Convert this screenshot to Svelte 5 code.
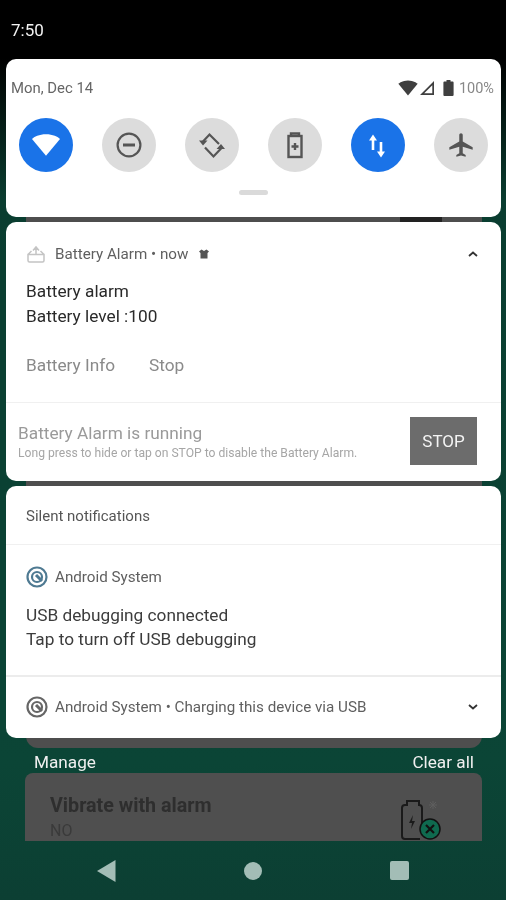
<script>
	let tiles = [
		{ id: 'wifi', on: true },
		{ id: 'dnd', on: false },
		{ id: 'rotate', on: false },
		{ id: 'saver', on: false },
		{ id: 'data', on: true },
		{ id: 'plane', on: false }
	];
</script>

<div class="screen">
	<div class="under"><div class="clipped"></div></div>

	<div class="status">7:50</div>

	<section class="card qs">
		<div class="qs-top">
			<span class="date">Mon, Dec 14</span>
			<div class="sys">
				<svg width="20" height="20" viewBox="0 0 24 24"><path d="M12 21 23.600 7C23 6.500 18.700 3 12 3S1 6.500.4 7z" fill="#3f3f3f" /></svg>
				<svg class="sig" width="16" height="16" viewBox="0 0 16 16"><path d="M15 1v14H1zM13.300 5.200 5.200 13.300h8.100z" fill="#3f3f3f" fill-rule="evenodd" /></svg>
				<svg class="bat" width="11" height="16" viewBox="0 0 11 16"><path d="M3.500 0h4v1.600h2.200c.5 0 .9.4.9.9v12.600c0 .5-.4.9-.9.9H1.300c-.5 0-.9-.4-.9-.9V2.500c0-.5.4-.9.9-.9h2.200z" fill="#3f3f3f" /></svg>
				<span class="pct">100%</span>
			</div>
		</div>
		<div class="tiles">
			{#each tiles as t}
				<div class="tile" class:on={t.on}>
					{#if t.id === 'wifi'}
						<svg width="32" height="32" viewBox="0 0 24 24"><path d="M12 20 22.500 7.500C21 6 17 4 12 4S3 6 1.500 7.500z" fill="#fff" /></svg>
					{:else if t.id === 'dnd'}
						<svg width="28" height="28" viewBox="0 0 28 28" fill="none" stroke="#555" stroke-width="2.200"><circle cx="14" cy="14" r="11.400" /><path d="M8 14h12" stroke-width="3" /></svg>
					{:else if t.id === 'rotate'}
						<svg width="28" height="28" viewBox="0 0 28 28" fill="none" stroke="#555" stroke-width="2.200">
							<path d="M5 10.500 11.500 3.500 21 13" />
							<path d="M7 16.500 15.500 25.500 23.500 17" />
							<path d="M1 9.500h8.500L5 14.500zM27 18h-8.500L23 13z" fill="#555" stroke="none" />
						</svg>
					{:else if t.id === 'saver'}
						<svg width="28" height="28" viewBox="0 0 28 28" fill="none" stroke="#555" stroke-width="2.400"><path d="M10 4.500V2.500h8v2" /><rect x="7.500" y="5" width="13" height="21" /><path d="M14 12v7M10.500 15.500h7" /></svg>
					{:else if t.id === 'data'}
						<svg width="28" height="28" viewBox="0 0 28 28" fill="#fff"><path d="M9 3.500 5 9.500h2.700V19h2.600V9.500H13z" /><path d="M17 26.500l4-6h-2.700V11h-2.600v9.500H13z" /></svg>
					{:else}
						<svg width="28" height="28" viewBox="0 0 24 24" fill="#555"><path d="M22 16v-2l-8.500-5V3.500c0-.8-.7-1.500-1.500-1.500s-1.500.7-1.500 1.500V9L2 14v2l8.500-2.500V19L8 20.500V22l4-1 4 1v-1.500L13.500 19v-5.500z" /></svg>
					{/if}
				</div>
			{/each}
		</div>
		<div class="grip"></div>
	</section>

	<section class="card alarm">
		<div class="app-row">
			<svg class="app-icon" width="22" height="20" viewBox="0 0 22 20" fill="none" stroke="#c4c4c4" stroke-width="1.500"><path d="M2 10.500h16v6c0 .8-.6 1.500-1.500 1.500h-13C2.600 18 2 17.300 2 16.500zM2 10.500 5.500 7M18 10.500 14.500 7M7 6.500 10 3l3 3.500M10 4v6" /></svg>
			<span class="app-name">Battery Alarm • now</span>
			<svg class="bell" width="12" height="12" viewBox="0 0 12 12" fill="#555"><path d="M3.500 1.500 6 3l2.500-1.500L11 3.500 9.500 5v5.500h-7V5L1 3.500z" /></svg>
			<svg class="chev" width="12" height="8" viewBox="0 0 12 8" fill="none" stroke="#333" stroke-width="1.800"><path d="M2 6 6 2.500 10 6" /></svg>
		</div>
		<div class="body-text">
			<p>Battery alarm</p>
			<p>Battery level :100</p>
		</div>
		<div class="actions">
			<span>Battery Info</span>
			<span>Stop</span>
		</div>
		<div class="running">
			<div class="running-text">
				<div class="run-title">Battery Alarm is running</div>
				<div class="run-sub">Long press to hide or tap on STOP to disable the Battery Alarm.</div>
			</div>
			<div class="stop-btn">STOP</div>
		</div>
	</section>

	<section class="card silent">
		<div class="silent-head">Silent notifications</div>
		<div class="usb">
			<div class="app-row">
				<svg class="app-icon" width="22" height="22" viewBox="0 0 22 22" fill="none" stroke="#4f7a92" stroke-width="2.200"><circle cx="11" cy="11" r="9.500" /><circle cx="11" cy="11" r="5" /><path d="M10 9l6 6" stroke-width="3" /></svg>
				<span class="app-name">Android System</span>
			</div>
			<div class="body-text usb-text">
				<p>USB debugging connected</p>
				<p>Tap to turn off USB debugging</p>
			</div>
		</div>
		<div class="charging">
			<svg class="app-icon" width="22" height="22" viewBox="0 0 22 22" fill="none" stroke="#666" stroke-width="2.200"><circle cx="11" cy="11" r="9.500" /><circle cx="11" cy="11" r="5" /><path d="M10 9l6 6" stroke-width="3" /></svg>
			<span class="app-name">Android System • Charging this device via USB</span>
			<svg class="chev" width="12" height="8" viewBox="0 0 12 8" fill="none" stroke="#333" stroke-width="1.800"><path d="M2 2 6 5.500 10 2" /></svg>
		</div>
	</section>

	<div class="shade-row">
		<span>Manage</span>
		<span>Clear all</span>
	</div>

	<div class="vibrate">
		<div>
			<div class="vib-title">Vibrate with alarm</div>
			<div class="vib-sub">NO</div>
		</div>
		<svg class="vib-icon" width="48" height="46" viewBox="0 0 48 46" fill="none">
			<path d="M25 28V12c0-2-1-3-3-3V5H10v4H8c-2 0-3 1-3 3v28c0 2 1 3 3 3h15" stroke="#1a1a1a" stroke-width="2" />
			<path d="M16 19l-4 8h3l-1 6 4-8h-3z" fill="#1a1a1a" />
			<path d="M36 5v8M32 9h8M33 6l6 6M39 6l-6 6" stroke="#5e5e5e" stroke-width="1" />
			<circle cx="33" cy="33" r="10" fill="#0f6a4f" stroke="#111" stroke-width="1.500" />
			<path d="M29 29l8 8M37 29l-8 8" stroke="#111" stroke-width="2.200" />
		</svg>
	</div>

	<nav class="nav">
		<svg width="19" height="22" viewBox="0 0 19 22"><path d="M18.500 0v22L0 11z" fill="#a3bdb6" /></svg>
		<div class="home"></div>
		<div class="recent"></div>
	</nav>
</div>

<style>
	:global(body) {
		background: #0b4334;
	}

	.screen {
		position: relative;
		width: 506px;
		height: 900px;
		overflow: hidden;
		display: flex;
		flex-direction: column;
		font-family: Roboto, sans-serif;
		background: linear-gradient(180deg, #000 0, #000 58px, #0a3d30 200px, #0b4536 760px, #0c3f33 900px);
		filter: blur(0.7px);
	}

	.under {
		position: absolute;
		left: 26px;
		top: 205px;
		width: 456px;
		height: 543px;
		background: #4e4e4e;
		border-radius: 0 0 12px 12px;
	}

	.clipped {
		position: absolute;
		left: 374px;
		top: 12px;
		width: 42px;
		height: 5px;
		background: #222;
	}

	.status {
		height: 59px;
		padding: 20px 0 0 11px;
		box-sizing: border-box;
		color: #f2f2f2;
		font-size: 17px;
	}

	.card {
		position: relative;
		margin: 0 5px 0 6px;
		background: #fff;
		border-radius: 10px;
	}

	.qs {
		height: 158px;
		margin-bottom: 5px;
	}

	.qs-top {
		display: flex;
		justify-content: space-between;
		align-items: center;
		padding: 18px 7px 0 5px;
		height: 22px;
	}

	.date {
		font-size: 14.900px;
		color: #666;
	}

	.sys {
		display: flex;
		align-items: center;
	}

	.sig {
		margin-left: 1px;
	}

	.bat {
		margin: 0 5px 0 8px;
	}

	.pct {
		font-size: 14.500px;
		color: #888;
	}

	.tiles {
		display: flex;
		justify-content: space-between;
		padding: 19px 13px 0 13px;
	}

	.tile {
		width: 54px;
		height: 54px;
		border-radius: 50%;
		background: #dcdcdc;
		display: flex;
		align-items: center;
		justify-content: center;
	}

	.tile.on {
		background: #1a73e8;
	}

	.grip {
		width: 29px;
		height: 5px;
		margin: 18px auto 0;
		border-radius: 3px;
		background: #dadada;
	}

	.alarm {
		height: 259px;
		margin-bottom: 5px;
		display: flex;
		flex-direction: column;
	}

	.app-row {
		display: flex;
		align-items: center;
		padding: 21px 22px 0 20px;
		height: 22px;
	}

	.app-icon {
		flex: none;
	}

	.app-name {
		margin-left: 7px;
		font-size: 15.200px;
		color: #5f5f5f;
	}

	.bell {
		margin-left: 10px;
	}

	.chev {
		margin-left: auto;
	}

	.body-text {
		padding: 14px 20px 0;
		font-size: 17.250px;
		line-height: 24.500px;
		color: #2a2a2a;
	}

	.body-text p {
		margin: 0;
	}

	.actions {
		display: flex;
		gap: 34px;
		padding: 25px 20px 0;
		font-size: 17.250px;
		line-height: 24px;
		color: #8a8a8a;
	}

	.running {
		display: flex;
		justify-content: space-between;
		align-items: flex-start;
		margin-top: 25px;
		padding: 15px 24px 0 12px;
		flex: 1;
		border-top: 1px solid #f0f0f0;
	}

	.run-title {
		font-size: 17.250px;
		color: #9a9a9a;
		margin-top: 5px;
	}

	.run-sub {
		font-size: 12.140px;
		color: #a6a6a6;
		margin-top: 3px;
	}

	.stop-btn {
		width: 67px;
		height: 48px;
		margin-top: -1px;
		display: flex;
		align-items: center;
		justify-content: center;
		background: #6c6c6c;
		color: #f4f4f4;
		font-size: 17px;
	}

	.silent {
		height: 252px;
	}

	.silent-head {
		height: 59px;
		padding: 21px 20px 0;
		box-sizing: border-box;
		font-size: 15px;
		color: #555;
		border-bottom: 1px solid #f0f0f0;
	}

	.usb {
		height: 132px;
		box-sizing: border-box;
		border-bottom: 2px solid #ececec;
	}

	.usb .app-row {
		padding-top: 21px;
	}

	.usb-text {
		padding-top: 15px;
		line-height: 24px;
		color: #3c3c3c;
	}

	.charging {
		display: flex;
		align-items: center;
		height: 59px;
		padding: 0 22px 0 20px;
	}

	.shade-row {
		display: flex;
		justify-content: space-between;
		height: 35px;
		padding: 13px 32px 0 34px;
		box-sizing: border-box;
		font-size: 17.200px;
		line-height: 22px;
		color: #f0f0f0;
	}

	.vibrate {
		margin: 0 24px 0 25px;
		height: 68px;
		box-sizing: border-box;
		padding: 21px 37px 0 25px;
		display: flex;
		justify-content: space-between;
		background: #4f4f4f;
		border-radius: 8px 8px 0 0;
		overflow: hidden;
	}

	.vib-title {
		font-size: 19.700px;
		font-weight: 700;
		color: #2e2e2e;
	}

	.vib-sub {
		margin-top: 4px;
		font-size: 16px;
		color: #3a3a3a;
	}

	.vib-icon {
		margin-top: 2px;
		flex: none;
	}

	.nav {
		flex: 1;
		display: flex;
		align-items: center;
		justify-content: center;
		gap: 128px;
	}

	.home {
		width: 18px;
		height: 18px;
		border-radius: 50%;
		background: #a3bdb6;
	}

	.recent {
		width: 19px;
		height: 19px;
		border-radius: 2px;
		background: #a3bdb6;
	}
</style>
